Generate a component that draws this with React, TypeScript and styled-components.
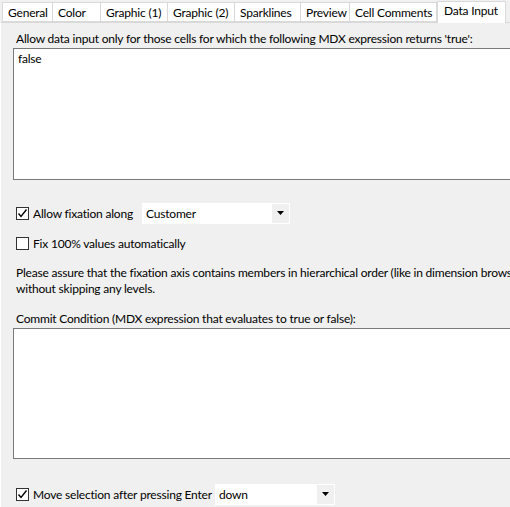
import React from 'react';
import styled, { createGlobalStyle } from 'styled-components';

const GlobalStyle = createGlobalStyle`
    html, body {
        margin: 0;
        padding: 0;
        background: #f0f0f0;
        overflow: hidden;
    }
    body {
        font-family: Lato, "Noto Sans", sans-serif;
        font-size: 12px;
        letter-spacing: -0.2px;
        color: #000;
    }
`;

const Window = styled.div`
    width: 510px;
    height: 507px;
    overflow: hidden;
    display: flex;
    flex-direction: column;
`;

const TabStrip = styled.div`
    display: flex;
    align-items: flex-end;
    height: 22px;
    padding-left: 2px;
    background: #f0f0f0;
`;

const Tab = styled.div<{ $w: number; $active?: boolean }>`
    box-sizing: border-box;
    width: ${p => p.$w}px;
    height: ${p => (p.$active ? 22 : 20)}px;
    padding: ${p => (p.$active ? '1px 0 0 6px' : '2px 0 0 5px')};
    margin-bottom: ${p => (p.$active ? -1 : 0)}px;
    background: #fff;
    border: 1px solid #d9d9d9;
    border-bottom: ${p => (p.$active ? 'none' : '1px solid #d9d9d9')};
    border-left: ${p => (p.$active ? '1px solid #d9d9d9' : 'none')};
    white-space: nowrap;
    position: relative;
    z-index: ${p => (p.$active ? 1 : 0)};
    &:first-child {
        border-left: 1px solid #d9d9d9;
    }
`;

const Panel = styled.div`
    flex: 1;
    border-top: 1px solid #d9d9d9;
    border-left: 1px solid #fff;
    padding: 8px 0 0 12px;
    display: flex;
    flex-direction: column;
`;

const Label = styled.div<{ $top?: number }>`
    margin-left: 3px;
    margin-top: ${p => p.$top ?? 0}px;
    height: 16px;
    line-height: 16px;
    white-space: nowrap;
`;

const TextArea = styled.div<{ $h: number }>`
    box-sizing: border-box;
    height: ${p => p.$h}px;
    margin-right: -20px;
    margin-top: 1px;
    background: #fff;
    border: 1px solid #7a7a7a;
    padding: 2px 4px;
    line-height: 16px;
`;

const Row = styled.div<{ $top: number }>`
    display: flex;
    align-items: center;
    height: 20px;
    margin-top: ${p => p.$top}px;
    margin-left: 3px;
`;

const CheckBox = styled.span`
    box-sizing: border-box;
    width: 13px;
    height: 13px;
    border: 1px solid #333;
    background: #fff;
    display: flex;
    align-items: center;
    justify-content: center;
    flex-shrink: 0;
`;

const CheckLabel = styled.span<{ $w?: number }>`
    margin-left: 4px;
    white-space: nowrap;
    flex-shrink: 0;
    width: ${p => (p.$w ? `${p.$w}px` : 'auto')};
`;

const Combo = styled.div<{ $w: number }>`
    box-sizing: border-box;
    width: ${p => p.$w}px;
    height: 21px;
    background: #fff;
    display: flex;
    align-items: center;
    padding-left: 4px;
`;

const ComboText = styled.span`
    flex: 1;
    white-space: nowrap;
`;

const ComboArrow = styled.span`
    width: 17px;
    height: 19px;
    margin-right: 1px;
    background: #f0f0f0;
    display: flex;
    align-items: center;
    justify-content: center;
`;

const Paragraph = styled.div`
    margin-top: 12px;
    margin-left: 3px;
    line-height: 16px;
    white-space: nowrap;
`;

const Check = () => (
    <svg width="11" height="11" viewBox="0 0 11 11">
        <path d="M1.5 5.5 L4 8.5 L9.5 1.5" fill="none" stroke="#000" strokeWidth="1.4" />
    </svg>
);

const Arrow = () => (
    <svg width="7" height="4" viewBox="0 0 7 4">
        <path d="M0 0 H7 L3.5 4 Z" fill="#000" />
    </svg>
);

const tabs: { label: string; w: number; active?: boolean }[] = [
    { label: 'General', w: 51 },
    { label: 'Color', w: 48 },
    { label: 'Graphic (1)', w: 67 },
    { label: 'Graphic (2)', w: 67 },
    { label: 'Sparklines', w: 66 },
    { label: 'Preview', w: 49 },
    { label: 'Cell Comments', w: 87 },
    { label: 'Data Input', w: 69, active: true },
];

export default function App() {
    return (
        <Window>
            <GlobalStyle />
            <TabStrip>
                {tabs.map(t => (
                    <Tab key={t.label} $w={t.w} $active={t.active}>{t.label}</Tab>
                ))}
            </TabStrip>
            <Panel>
                <Label>Allow data input only for those cells for which the following MDX expression returns 'true':</Label>
                <TextArea $h={132}>false</TextArea>
                <Row $top={23}>
                    <CheckBox><Check /></CheckBox>
                    <CheckLabel $w={109}>Allow fixation along</CheckLabel>
                    <Combo $w={148}>
                        <ComboText>Customer</ComboText>
                        <ComboArrow><Arrow /></ComboArrow>
                    </Combo>
                </Row>
                <Row $top={10}>
                    <CheckBox />
                    <CheckLabel>Fix 100% values automatically</CheckLabel>
                </Row>
                <Paragraph>
                    Please assure that the fixation axis contains members in hierarchical order (like in dimension browser)
                    <br />
                    without skipping any levels.
                </Paragraph>
                <Label $top={14}>Commit Condition (MDX expression that evaluates to true or false):</Label>
                <TextArea $h={131} />
                <Row $top={25}>
                    <CheckBox><Check /></CheckBox>
                    <CheckLabel $w={182}>Move selection after pressing Enter</CheckLabel>
                    <Combo $w={120}>
                        <ComboText>down</ComboText>
                        <ComboArrow><Arrow /></ComboArrow>
                    </Combo>
                </Row>
            </Panel>
        </Window>
    );
}
